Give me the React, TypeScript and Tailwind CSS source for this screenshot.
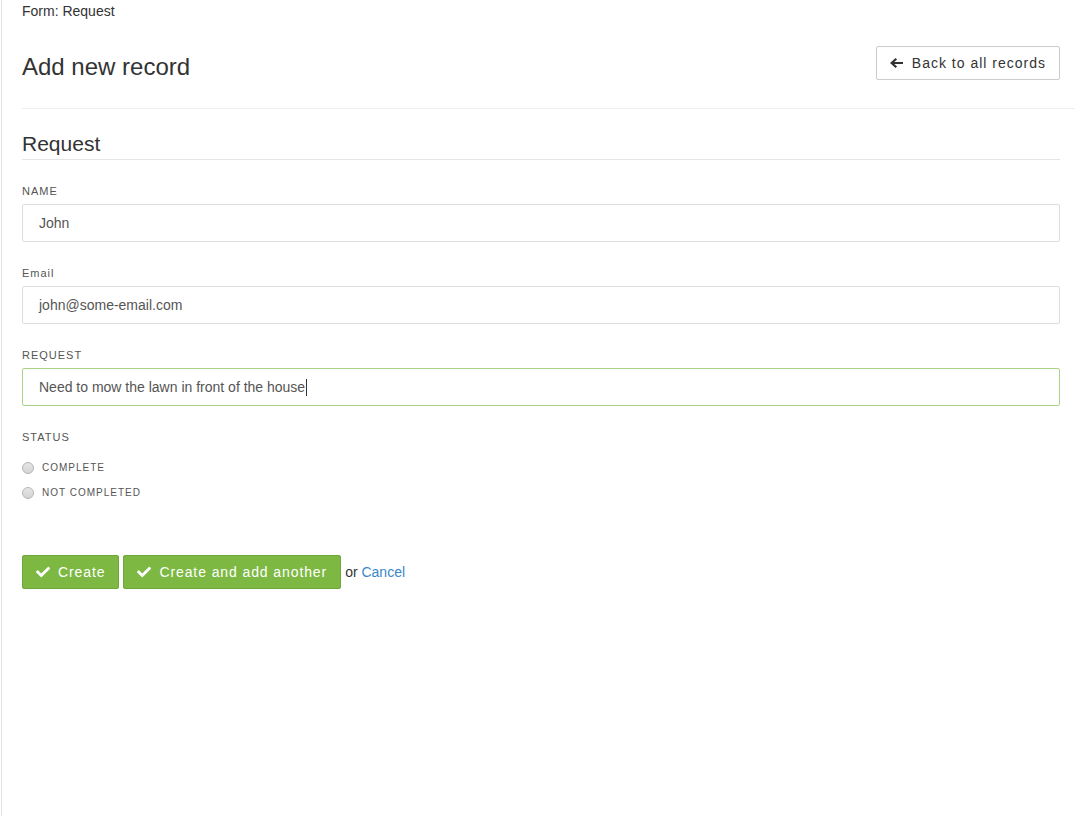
import React from 'react';
import { FaCheck } from 'react-icons/fa';

const font = { fontFamily: '"Liberation Sans", Arial, sans-serif' };

const ArrowLeft = () => (
  <svg viewBox="0 0 14 12" className="w-[13px] h-[12px]" fill="#333">
    <path d="M0 6 L6 0.5 L7.6 2.1 L4.6 4.8 H14 V7.2 H4.6 L7.6 9.9 L6 11.5 Z" />
  </svg>
);

const Field: React.FC<{ label: string; value: string; active?: boolean }> = ({ label, value, active }) => (
  <div className="mb-[24px]">
    <label className="block text-[11px] leading-[14px] tracking-[1px] text-[#555] mb-[6px]">{label}</label>
    <div
      className={`h-[38px] rounded-[2px] border flex items-center pl-[16px] text-[14px] text-[#555] ${
        active ? 'border-[#a9d585]' : 'border-[#dedede]'
      }`}
    >
      {value}
      {active && <span className="inline-block w-px h-[17px] bg-[#333] ml-px" />}
    </div>
  </div>
);

const Radio: React.FC<{ label: string }> = ({ label }) => (
  <div className="h-[25px] flex items-center gap-[8px]">
    <span className="w-[12px] h-[12px] rounded-full border border-[#b5b5b5] bg-gradient-to-b from-[#e6e6e6] to-[#d4d4d4]" />
    <span className="text-[10px] tracking-[1px] text-[#555]">{label}</span>
  </div>
);

export default function App() {
  return (
    <div className="min-h-screen h-[816px] bg-white pl-[1px]" style={font}>
      <div className="h-full border-l border-[#e3e3e3] pl-[20px] pr-[4px] text-[#333]">
        <div className="pt-[1px] text-[14px] leading-[20px]">Form: Request</div>

        <div className="border-b border-[#eeeeee] pb-[28px] mt-[25px] pr-[15px] flex justify-between items-start">
          <h1 className="text-[24px] leading-[26px] mt-[8px] font-normal">Add new record</h1>
          <button className="h-[34px] px-[13px] border border-[#cccccc] rounded-[2px] bg-white flex items-center gap-[9px] text-[14px] tracking-[1px] text-[#333]">
            <ArrowLeft />
            Back to all records
          </button>
        </div>

        <div className="pr-[15px]">
          <h2 className="mt-[23px] text-[21px] leading-[24px] pb-[3px] border-b border-[#e5e5e5]">Request</h2>

          <div className="mt-[24px]">
            <Field label="NAME" value="John" />
            <Field label="Email" value="john@some-email.com" />
            <Field label="REQUEST" value="Need to mow the lawn in front of the house" active />

            <label className="block text-[11px] leading-[14px] tracking-[1px] text-[#555]">STATUS</label>
            <div className="mt-[11px]">
              <Radio label="COMPLETE" />
              <Radio label="NOT COMPLETED" />
            </div>
          </div>

          <div className="mt-[50px] flex items-center gap-[4px] text-[14px]">
            <button className="h-[34px] px-[13px] rounded-[2px] border border-[#6fa83a] bg-[#7db843] text-white flex items-center gap-[8px] tracking-[0.9px]">
              <FaCheck className="w-[14px] h-[14px]" />
              Create
            </button>
            <button className="h-[34px] px-[13px] rounded-[2px] border border-[#6fa83a] bg-[#7db843] text-white flex items-center gap-[8px] tracking-[0.9px]">
              <FaCheck className="w-[14px] h-[14px]" />
              Create and add another
            </button>
            <span className="text-[#333]">
              or <a className="text-[#3a87c8]">Cancel</a>
            </span>
          </div>
        </div>
      </div>
    </div>
  );
}
